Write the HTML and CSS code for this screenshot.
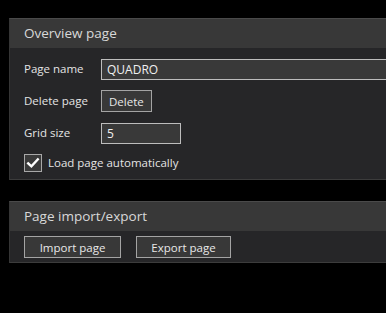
FILE: index.html
```html
<!DOCTYPE html>
<html lang="en">
<head>
    <meta charset="UTF-8">
    <meta name="viewport" content="width=device-width, initial-scale=1.0">
    <title>Overview page</title>
    <link rel="stylesheet" href="styles.css">
</head>
<body>
    <div class="panel">
        <div class="panel-header">Overview page</div>
        <div class="panel-body form">
            <label for="pageName">Page name</label>
            <input type="text" id="pageName" class="field wide" value="QUADRO">

            <span class="label">Delete page</span>
            <div><button class="btn">Delete</button></div>

            <label for="gridSize">Grid size</label>
            <div><input type="text" id="gridSize" class="field small" value="5"></div>

            <label class="check-row">
                <span class="checkbox">
                    <svg width="14" height="14" viewBox="0 0 14 14">
                        <path d="M2.2 7.4 L5.4 10.4 L11.8 3.4" fill="none" stroke="#ffffff" stroke-width="2.4" stroke-linecap="square"/>
                    </svg>
                </span>
                Load page automatically
            </label>
        </div>
    </div>

    <div class="panel second">
        <div class="panel-header">Page import/export</div>
        <div class="panel-body buttons">
            <button class="btn import">Import page</button>
            <button class="btn export">Export page</button>
        </div>
    </div>
</body>
</html>
```

FILE: styles.css
```css
body {
    margin: 0;
    background-color: #000000;
    font-family: 'Open Sans', 'Noto Sans', sans-serif;
    font-size: 11.5px;
    color: #e4e4e4;
    overflow: hidden;
    padding-top: 18px;
}

.panel {
    margin-left: 9px;
    width: 377px;
    background-color: #262628;
    border-top: 1px solid #4a4a4a;
    border-left: 1px solid #353535;
    border-bottom: 1px solid #3c3c3c;
    box-sizing: border-box;
    overflow: hidden;
}

.panel.second {
    margin-top: 21px;
}

.panel-header {
    height: 29px;
    background-color: #383838;
    color: #d8d8d8;
    font-size: 13.5px;
    line-height: 29px;
    padding-left: 14px;
}

.panel-body {
    padding-left: 14px;
}

.form {
    display: grid;
    grid-template-columns: 77px 1fr;
    grid-template-rows: 22px 22px 22px 18px;
    row-gap: 10px;
    align-items: center;
    padding-top: 10px;
    padding-bottom: 7px;
}

.form label,
.form .label {
    line-height: 22px;
}

.field {
    box-sizing: border-box;
    height: 21px;
    background-color: #393939;
    border: 1px solid #bdbdbd;
    color: #f0f0f0;
    font-family: inherit;
    font-size: 12px;
    padding: 0 5px;
    outline: none;
    display: block;
}

.field.wide {
    width: 320px;
}

.field.small {
    width: 80px;
}

.btn {
    box-sizing: border-box;
    height: 22px;
    background-color: #383838;
    border: 1px solid #a4a4a4;
    color: #e8e8e8;
    font-family: inherit;
    font-size: 11.5px;
    padding: 0 7px;
    display: block;
}

.check-row {
    grid-column: 1 / 3;
    display: flex;
    align-items: center;
    gap: 6px;
    height: 18px;
    line-height: 18px !important;
}

.checkbox {
    box-sizing: border-box;
    width: 18px;
    height: 18px;
    border: 1px solid #a8a8a8;
    background-color: #3a3a3a;
    display: flex;
    align-items: center;
    justify-content: center;
}

.buttons {
    display: flex;
    gap: 15px;
    padding-top: 5px;
    padding-bottom: 4px;
}

.btn.import {
    width: 97px;
}

.btn.export {
    width: 95px;
}
```
